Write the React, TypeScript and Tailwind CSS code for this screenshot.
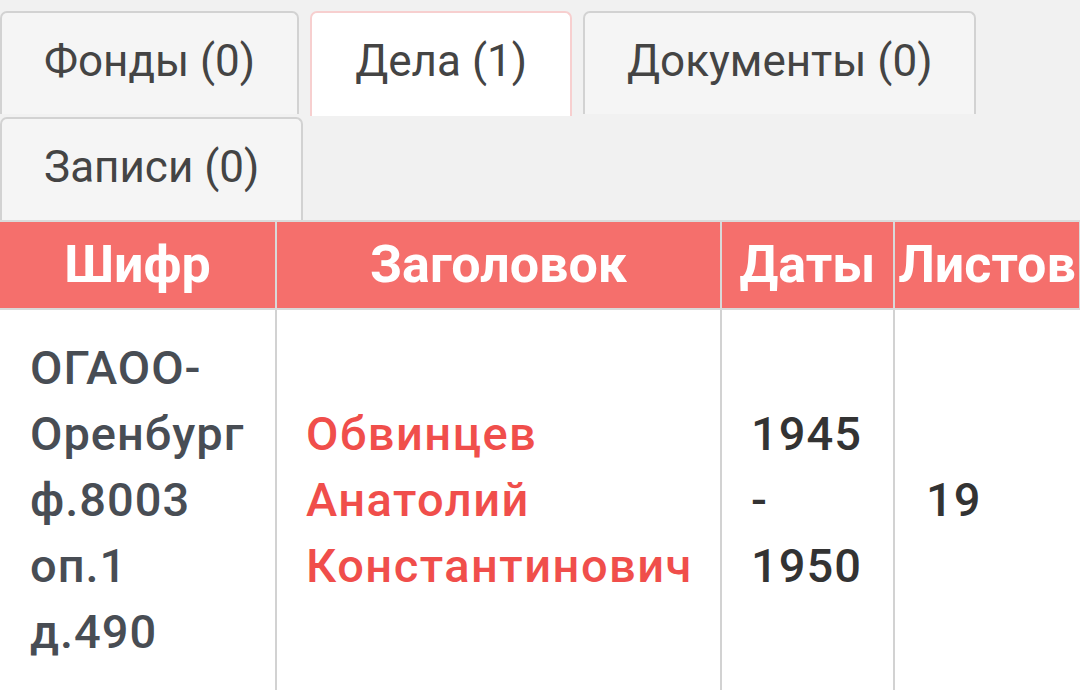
const TABS = [
  { label: 'Фонды (0)', active: false },
  { label: 'Дела (1)', active: true },
  { label: 'Документы (0)', active: false },
  { label: 'Записи (0)', active: false },
];

const HEADERS = ['Шифр', 'Заголовок', 'Даты', 'Листов'];

const cell = 'bg-white flex items-center text-[47px] leading-[66px] font-medium whitespace-nowrap';

export default function App() {
  return (
    <div className="w-[1080px] h-[690px] overflow-hidden flex flex-col bg-[#f1f1f1] font-['Roboto',sans-serif]">
      {/* tabs */}
      <div className="flex flex-wrap gap-x-[11px] gap-y-[3px] pt-[11px]">
        {TABS.map((t) => (
          <div
            key={t.label}
            className={
              t.active
                ? 'h-[105px] -mb-[2px] px-[43px] pb-[7px] flex items-center rounded-t-[7px] border-2 border-b-0 border-[#f7cfcf] bg-white text-[44px] text-[#444]'
                : 'h-[103px] px-[42px] pb-[5px] flex items-center rounded-t-[7px] border-2 border-b-0 border-[#d2d2d2] bg-[#f5f5f5] text-[44px] text-[#444]'
            }
          >
            {t.label}
          </div>
        ))}
      </div>

      {/* table */}
      <div className="flex-1 grid grid-cols-[277px_445px_173px_186px] grid-rows-[88px_1fr] border-t-2 border-[#dadada]">
        {HEADERS.map((h) => (
          <div
            key={h}
            className="flex items-center justify-center bg-[#f56f6c] border-r-2 border-b-2 border-[#d9d9d9] text-white font-bold text-[52px] whitespace-nowrap"
          >
            {h}
          </div>
        ))}

        <div className={`${cell} tracking-[1px] border-r-2 border-[#d2d2d2] pl-[30px] text-[#484d54]`}>
          <div>
            <div>ОГАОО-</div>
            <div>Оренбург</div>
            <div>ф.8003</div>
            <div>оп.1</div>
            <div>д.490</div>
          </div>
        </div>
        <div className={`${cell} tracking-[1.5px] border-r-2 border-[#d2d2d2] pl-[29px] text-[#f04e4b]`}>
          <div>
            <div>Обвинцев</div>
            <div>Анатолий</div>
            <div>Константинович</div>
          </div>
        </div>
        <div className={`${cell} tracking-[1px] border-r-2 border-[#d2d2d2] pl-[29px] text-[#333]`}>
          <div>
            <div>1945</div>
            <div>-</div>
            <div>1950</div>
          </div>
        </div>
        <div className={`${cell} tracking-[1px] pl-[31px] text-[#333]`}>19</div>
      </div>
    </div>
  );
}
